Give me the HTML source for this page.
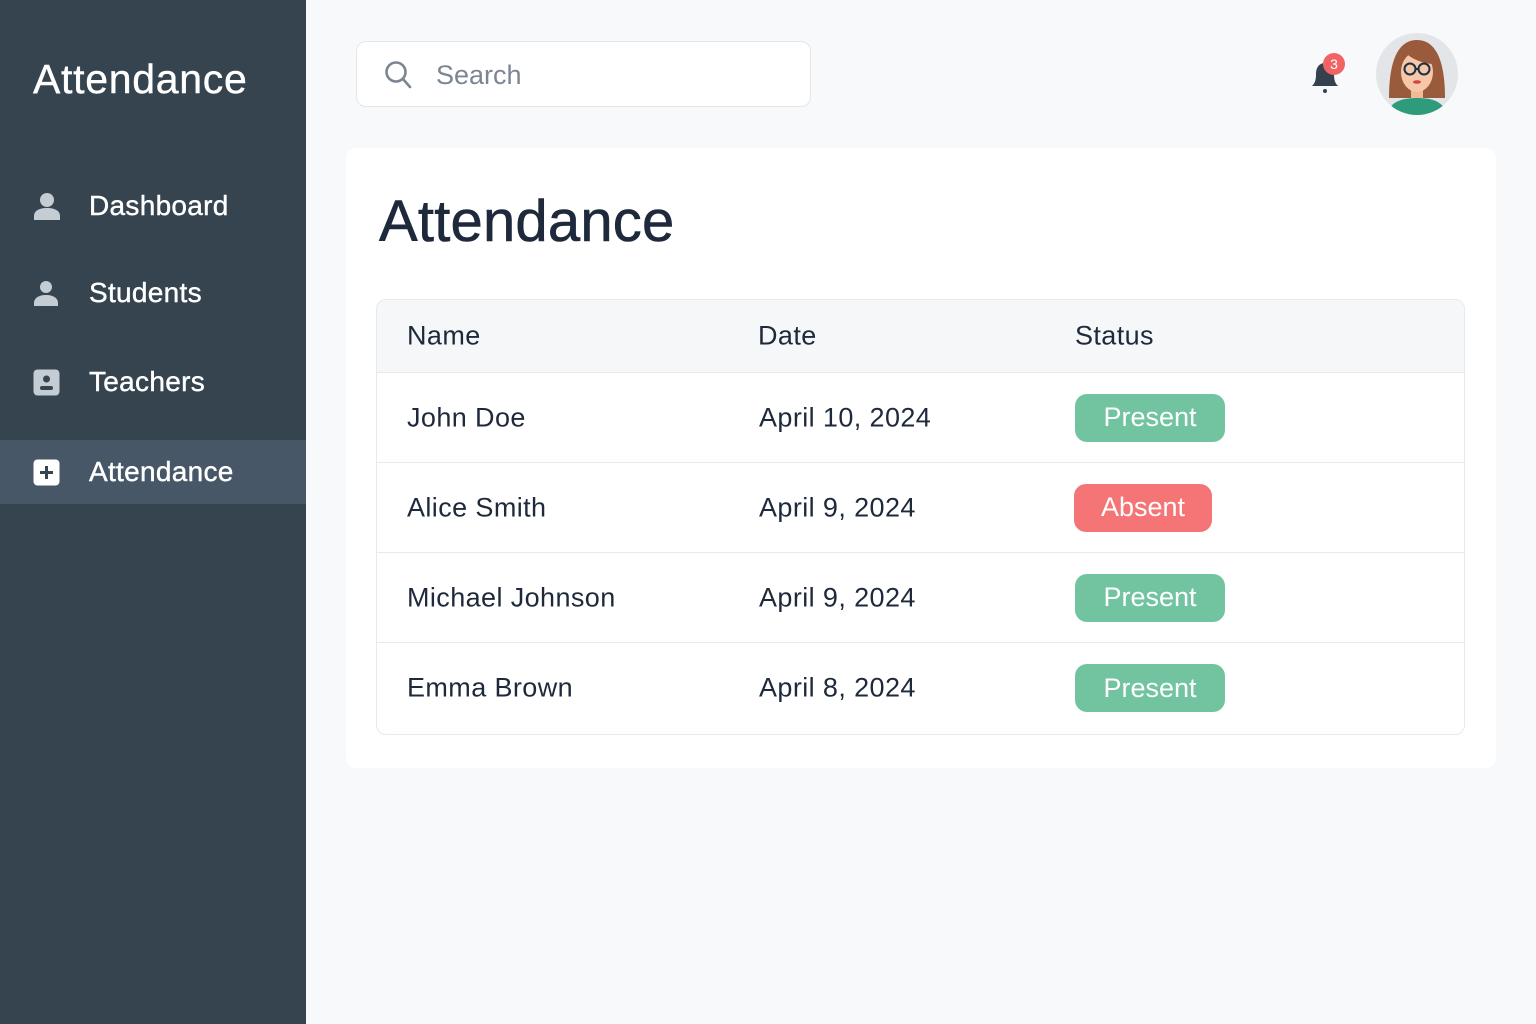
<!DOCTYPE html>
<html><head><meta charset="utf-8"><style>
*{margin:0;padding:0;box-sizing:border-box}
body{width:1536px;height:1024px;background:#f8f9fb;font-family:"Liberation Sans",sans-serif;position:relative;overflow:hidden;color:#1e293b}
.side{position:absolute;left:0;top:0;width:306px;height:1024px;background:#36444f}
.logo{position:absolute;left:33px;top:56px;color:#fff;font-size:41px;letter-spacing:0.7px;-webkit-text-stroke:0.4px #fff}
.nav{position:absolute;left:0;width:306px;height:64px;color:#fff;font-size:28px;display:flex;align-items:center}
.nav svg{position:absolute;left:33px}
.nav span{position:absolute;left:89px;letter-spacing:0.3px;-webkit-text-stroke:0.4px #fff}
.act{background:#475767}
.search{position:absolute;left:356px;top:41px;width:455px;height:66px;background:#fff;border:1.5px solid #e3e6ea;border-radius:10px}
.search span{position:absolute;left:79px;top:18px;font-size:27px;color:#7c8591}
.card{position:absolute;left:346px;top:148px;width:1150px;height:620px;background:#fff;border-radius:10px}
h1{position:absolute;left:379px;top:188px;font-size:58px;font-weight:normal;color:#1e293b;letter-spacing:0.2px;-webkit-text-stroke:0.6px #1e293b}
.tbl{position:absolute;left:376px;top:299px;width:1089px;height:436px;border:1.5px solid #e6e9ed;border-radius:10px;overflow:hidden}
.hd{height:73px;background:#f6f7f9;border-bottom:1.5px solid #e6e9ed;position:relative}
.row{height:90px;border-bottom:1.5px solid #e6e9ed;position:relative}
.row:last-child{border-bottom:none}
.c{position:absolute;top:50%;transform:translateY(-50%);font-size:27px;color:#1e293b;letter-spacing:0.4px}
.b{position:absolute;top:50%;transform:translateY(-50%);height:48px;border-radius:12px;color:#fff;font-size:27px;display:flex;align-items:center;justify-content:center}
.p{background:#72c4a1;width:150px;left:698px}.a{background:#f57476;width:138px;left:697px}
</style></head><body>
<div class="side">
<div class="logo">Attendance</div>
<div class="nav" style="top:174px"><svg width="28" height="30" viewBox="0 0 28 30"><circle cx="14" cy="9" r="7" fill="#c4ccd4"/><path d="M1 29v-4c0-5 5-8 13-8s13 3 13 8v4z" fill="#c4ccd4"/></svg><span>Dashboard</span></div>
<div class="nav" style="top:261px"><svg width="26" height="28" viewBox="0 0 26 28"><circle cx="13" cy="8" r="6" fill="#c4ccd4"/><path d="M1 27v-3c0-5 5-8 12-8s12 3 12 8v3z" fill="#c4ccd4"/></svg><span>Students</span></div>
<div class="nav" style="top:350px"><svg width="27" height="27" viewBox="0 0 27 27"><rect x="0.5" y="0.5" width="26" height="26" rx="4" fill="#c4ccd4"/><circle cx="13.5" cy="10" r="3.5" fill="#36444f"/><rect x="7" y="17" width="13" height="4" rx="2" fill="#36444f"/></svg><span>Teachers</span></div>
<div class="nav act" style="top:440px"><svg width="27" height="27" viewBox="0 0 27 27"><rect x="0.5" y="0.5" width="26" height="26" rx="4" fill="#fff"/><path d="M13.5 7v13M7 13.5h13" stroke="#36444f" stroke-width="3"/></svg><span>Attendance</span></div>
</div>
<div class="search"><svg style="position:absolute;left:27px;top:18px" width="28" height="30" viewBox="0 0 28 30"><circle cx="12" cy="12" r="9.5" fill="none" stroke="#7c8591" stroke-width="2.6"/><path d="M19 19l7 8" stroke="#7c8591" stroke-width="2.6" stroke-linecap="round"/></svg><span>Search</span></div>
<svg style="position:absolute;left:1308px;top:52px" width="42" height="42" viewBox="0 0 42 42"><path d="M4 34c3-3 4-6 4-12s3-11 9-11 9 5 9 11 1 9 4 12z" fill="#34414f"/><circle cx="17" cy="39" r="2" fill="#34414f"/><circle cx="26" cy="12" r="11" fill="#f26366"/><text x="26" y="17" font-size="14" fill="#fff" text-anchor="middle" font-family="Liberation Sans">3</text></svg>
<svg style="position:absolute;left:1375px;top:32px" width="84" height="84" viewBox="0 0 84 84"><defs><clipPath id="cl"><circle cx="42" cy="42" r="41"/></clipPath></defs><circle cx="42" cy="42" r="41" fill="#e4e5e8"/><g clip-path="url(#cl)"><path d="M14 66c0-30 6-58 28-58s28 28 28 58z" fill="#9a5a3c"/><rect x="36" y="52" width="12" height="14" fill="#f0b998"/><path d="M12 84c2-14 14-18 30-18s28 4 30 18z" fill="#2e9c7c"/><ellipse cx="42" cy="40" rx="16" ry="20" fill="#f6c7a8"/><path d="M25 34c3-12 10-18 22-16 6 2 9 8 10 14-10-1-20-5-25-10-3 5-5 9-7 12z" fill="#9a5a3c"/><circle cx="35" cy="37" r="5.5" fill="none" stroke="#1f2f3f" stroke-width="2"/><circle cx="49" cy="37" r="5.5" fill="none" stroke="#1f2f3f" stroke-width="2"/><path d="M40 37h4" stroke="#1f2f3f" stroke-width="2"/><ellipse cx="42" cy="50" rx="4" ry="1.8" fill="#d7413f"/></g></svg>
<div class="card"></div>
<h1>Attendance</h1>
<div class="tbl">
<div class="hd"><div class="c" style="left:30px">Name</div><div class="c" style="left:381px">Date</div><div class="c" style="left:698px">Status</div></div>
<div class="row"><div class="c" style="left:30px">John Doe</div><div class="c" style="left:382px">April 10, 2024</div><div class="b p">Present</div></div>
<div class="row"><div class="c" style="left:30px">Alice Smith</div><div class="c" style="left:382px">April 9, 2024</div><div class="b a">Absent</div></div>
<div class="row"><div class="c" style="left:30px">Michael Johnson</div><div class="c" style="left:382px">April 9, 2024</div><div class="b p">Present</div></div>
<div class="row"><div class="c" style="left:30px">Emma Brown</div><div class="c" style="left:382px">April 8, 2024</div><div class="b p">Present</div></div>
</div>
</body></html>
